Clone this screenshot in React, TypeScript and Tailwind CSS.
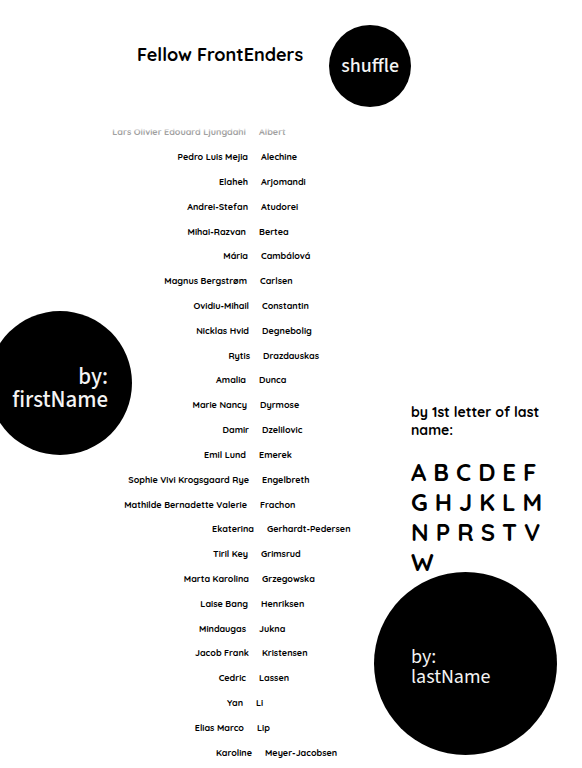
const people: [string, string][] = [
  ["Lars Olivier Edouard Ljungdahl", "Albert"],
  ["Pedro Luis Mejia", "Alechine"],
  ["Elaheh", "Arjomandi"],
  ["Andrei-Stefan", "Atudorei"],
  ["Mihai-Razvan", "Bertea"],
  ["Mária", "Cambálová"],
  ["Magnus Bergstrøm", "Carlsen"],
  ["Ovidiu-Mihail", "Constantin"],
  ["Nicklas Hvid", "Degnebolig"],
  ["Rytis", "Drazdauskas"],
  ["Amalia", "Dunca"],
  ["Marie Nancy", "Dyrmose"],
  ["Damir", "Dzelilovic"],
  ["Emil Lund", "Emerek"],
  ["Sophie Vivi Krogsgaard Rye", "Engelbreth"],
  ["Mathilde Bernadette Valerie", "Frachon"],
  ["Ekaterina", "Gerhardt-Pedersen"],
  ["Tiril Key", "Grimsrud"],
  ["Marta Karolina", "Grzegowska"],
  ["Laise Bang", "Henriksen"],
  ["Mindaugas", "Jukna"],
  ["Jacob Frank", "Kristensen"],
  ["Cedric", "Lassen"],
  ["Yan", "Li"],
  ["Elias Marco", "Lip"],
  ["Karoline", "Meyer-Jacobsen"],
];

const letters = "ABCDEFGHJKLMNPRSTVW".split("");

// Longer last names push the seam between the two names to the right.
const seam = (lastName: string) => 142 + Math.round(lastName.length * 0.7);

function Person({ first, last, faded }: { first: string; last: string; faded: boolean }) {
  return (
    <li className={`flex items-center gap-[13px] whitespace-nowrap ${faded ? "text-[#a0a0a0]" : ""}`}>
      <span className="flex shrink-0 justify-end" style={{ width: seam(last) }}>
        {first}
      </span>
      <span>{last}</span>
    </li>
  );
}

export default function App() {
  return (
    <div className="flex h-screen flex-col overflow-hidden bg-white font-['Quicksand','Lato',sans-serif] font-bold text-black">
      <header className="flex h-32 shrink-0 items-start justify-center gap-[26px] pr-[34px] pt-[25px]">
        <h1 className="pt-4 text-[18px] leading-7">Fellow FrontEnders</h1>
        <button className="size-[82px] rounded-full bg-black font-['Source_Sans_3','Source_Sans_Pro','PT_Sans','Lato',sans-serif] text-[20px] font-medium text-[#f4f4f4]">
          shuffle
        </button>
      </header>

      <main className="grid min-h-0 flex-1 grid-cols-[100px_1fr_208px]">
        <div className="pt-[183px]">
          <button className="-ml-3 flex size-36 items-center justify-end rounded-full bg-black pr-6 pt-2.5 text-right font-['Source_Sans_3','Source_Sans_Pro','PT_Sans','Lato',sans-serif] text-[23px] font-medium leading-[23px] text-[#f4f4f4]">
            <span>
              by:
              <br />
              firstName
            </span>
          </button>
        </div>

        <section aria-label="People" className="relative min-h-0 overflow-hidden">
          <ul className="-mt-2 grid h-[645px] auto-rows-fr text-[9px] leading-3">
            {people.map(([first, last], i) => (
              <Person key={last} first={first} last={last} faded={i === 0} />
            ))}
          </ul>
          <div className="pointer-events-none absolute inset-x-0 top-0 h-1 bg-linear-to-b from-white to-transparent" />
        </section>

        <aside className="flex flex-col items-start pt-[275px]">
          <div className="pl-[37px]">
            <h2 className="w-34 text-[14px] leading-[18px]">by 1st letter of last name:</h2>
            <div className="mt-[18px] flex w-34 flex-wrap gap-x-[7px] text-[24px] leading-[30px]">
              {letters.map((letter) => (
                <button key={letter}>{letter}</button>
              ))}
            </div>
          </div>
          <button className="-mt-[5px] flex size-[183px] shrink-0 items-center rounded-full bg-black pl-[37px] pt-1.5 text-left font-['Source_Sans_3','Source_Sans_Pro','PT_Sans','Lato',sans-serif] text-[20px] leading-5 font-normal text-[#f4f4f4]">
            <span>
              by:
              <br />
              lastName
            </span>
          </button>
        </aside>
      </main>
    </div>
  );
}
